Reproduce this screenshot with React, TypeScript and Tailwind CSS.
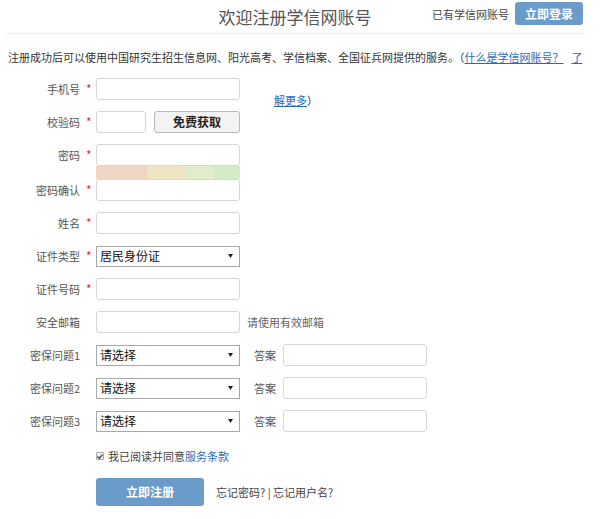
import React from "react";

const inputCls = "h-[22px] w-[144px] rounded-[3px] border border-[#d6d6d6] bg-white outline-none";

function Row({
  label,
  required,
  children,
  className = "",
}: {
  label?: string;
  required?: boolean;
  children?: React.ReactNode;
  className?: string;
}) {
  return (
    <div className={"flex h-[22px] items-center " + className}>
      <div className="w-[80px] whitespace-nowrap text-right text-[#555]">{label}</div>
      <div className="w-[16px] pl-[6px] text-[12px] text-[#e03030]">{required ? "*" : ""}</div>
      {children}
    </div>
  );
}

function Select({ value }: { value: string }) {
  return (
    <div className="flex h-[21px] w-[144px] items-center justify-between border border-[#a8a8a8] bg-white pl-[3px] pr-[6px] text-[12px] text-[#111]">
      <span>{value}</span>
      <svg width="5" height="4" viewBox="0 0 5 4">
        <path d="M0 0h5L2.5 4z" fill="#222" />
      </svg>
    </div>
  );
}

function Question({ n, className = "" }: { n: number; className?: string }) {
  return (
    <Row label={"密保问题" + n} className={className}>
      <Select value="请选择" />
      <span className="ml-[14px] w-[29px] text-[#555]">答案</span>
      <input className={inputCls} readOnly />
    </Row>
  );
}

export default function App() {
  return (
    <main className="min-h-screen w-[616px] bg-white font-['Noto_Sans_CJK_SC','Noto_Sans',sans-serif] text-[11px] leading-[16px] text-[#333]">
      {/* header */}
      <header className="ml-[7px] grid h-[34px] w-[576px] grid-cols-[1fr_auto_1fr] items-center border-b border-[#e8e8e8]">
        <div />
        <h1 className="text-[17px] font-normal text-[#555]">欢迎注册学信网账号</h1>
        <div className="flex items-center justify-end gap-[6px] self-start pt-[2px]">
          <span className="text-[11px] text-[#444]">已有学信网账号</span>
          <button className="h-[23px] w-[68px] rounded-[3px] bg-[#6b9bc9] text-[12px] font-bold text-white">
            立即登录
          </button>
        </div>
      </header>

      {/* notice */}
      <p className="mt-[15px] whitespace-nowrap pl-[8px] text-[#333]">
        注册成功后可以使用中国研究生招生信息网、阳光高考、学信档案、全国征兵网提供的服务。（
        <a className="text-[#1f6db8] underline">什么是学信网账号？</a>
        <span className="ml-[8px] text-[#1f6db8] underline">了</span>
      </p>

      {/* form */}
      <div className="mt-[13px]">
        <Row label="手机号" required>
          <input className={inputCls} readOnly />
          <span className="mb-[-8px] ml-[34px] self-end text-[#333]">
            <a className="text-[#1f6db8] underline">解更多</a>）
          </span>
        </Row>

        <Row label="校验码" required className="mt-[11px]">
          <input className="h-[22px] w-[50px] rounded-[3px] border border-[#d6d6d6] bg-white outline-none" readOnly />
          <button className="ml-[8px] h-[22px] w-[86px] rounded-[3px] border border-[#b8b8b8] bg-[#f3f3f3] text-[12px] font-bold text-[#222]">
            免费获取
          </button>
        </Row>

        <Row label="密码" required className="mt-[11px]">
          <input className={inputCls} readOnly />
        </Row>
        <div className="ml-[96px] flex h-[13px] w-[144px]">
          <div className="w-[51px] bg-[#f0d5c4]" />
          <div className="w-[39px] bg-[#efe5c2]" />
          <div className="w-[28px] bg-[#e2ebca]" />
          <div className="w-[26px] bg-[#d3ecc5]" />
        </div>
        <Row label="密码确认" required>
          <input className={inputCls} readOnly />
        </Row>

        <Row label="姓名" required className="mt-[11px]">
          <input className={inputCls} readOnly />
        </Row>

        <Row label="证件类型" required className="mt-[11px]">
          <Select value="居民身份证" />
        </Row>

        <Row label="证件号码" required className="mt-[11px]">
          <input className={inputCls} readOnly />
        </Row>

        <Row label="安全邮箱" className="mt-[11px]">
          <input className={inputCls} readOnly />
          <span className="ml-[7px] text-[#666]">请使用有效邮箱</span>
        </Row>

        <Question n={1} className="mt-[11px]" />
        <Question n={2} className="mt-[11px]" />
        <Question n={3} className="mt-[11px]" />

        {/* agreement */}
        <div className="ml-[96px] mt-[16px] flex items-center gap-[4px]">
          <span className="flex h-[8px] w-[8px] items-center justify-center rounded-[1px] border border-[#aaa] bg-[#eee]">
            <svg width="6" height="5" viewBox="0 0 6 5">
              <path d="M0.5 2.5l1.8 1.8L5.5 0.7" stroke="#333" strokeWidth="1.2" fill="none" />
            </svg>
          </span>
          <span className="text-[#444]">
            我已阅读并同意<a className="text-[#2a70bd]">服务条款</a>
          </span>
        </div>

        {/* submit */}
        <div className="ml-[96px] mt-[14px] flex items-center gap-[12px]">
          <button className="h-[28px] w-[108px] rounded-[3px] bg-[#6b9bc9] text-[12px] font-bold text-white">
            立即注册
          </button>
          <span className="text-[#444]">忘记密码? | 忘记用户名?</span>
        </div>
      </div>
    </main>
  );
}
